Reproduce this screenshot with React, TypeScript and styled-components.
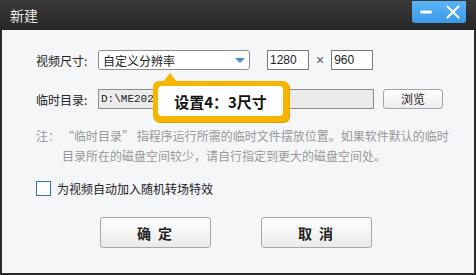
import styled, { createGlobalStyle } from 'styled-components';

const GlobalStyle = createGlobalStyle`
  html, body {
    margin: 0;
    padding: 0;
    background: #2b2b2b;
  }
  body {
    font-family: "Noto Sans CJK SC", "Liberation Sans", sans-serif;
  }
`;

const App: React.FC = () => {
  return (
    <Window>
      <GlobalStyle />
      <TitleBar>
        <Title>新建</Title>
        <WinButtons>
          <WinBtn aria-label="minimize">
            <svg width="16" height="16" viewBox="0 0 16 16">
              <rect x="2" y="6.5" width="12" height="3" rx="1.5" fill="#fff" />
            </svg>
          </WinBtn>
          <WinBtn aria-label="close">
            <svg width="16" height="16" viewBox="0 0 16 16">
              <path d="M2.5 2.5 L13.5 13.5 M13.5 2.5 L2.5 13.5" stroke="#fff" strokeWidth="2" strokeLinecap="round" />
            </svg>
          </WinBtn>
        </WinButtons>
      </TitleBar>
      <Body>
        <Row>
          <Label>视频尺寸:</Label>
          <Select>
            <span>自定义分辨率</span>
            <Arrow />
          </Select>
          <SizeInput $gap={17}>1280</SizeInput>
          <Times>×</Times>
          <SizeInput $gap={7}>960</SizeInput>
        </Row>
        <Row>
          <Label>临时目录:</Label>
          <PathInput>D:\ME2024</PathInput>
          <Browse>浏览</Browse>
          <Callout>
            <CalloutInner>设置4：3尺寸</CalloutInner>
          </Callout>
        </Row>
        <Note>
          <NoteHead>注：</NoteHead>
          <span>
            “临时目录” 指程序运行所需的临时文件摆放位置。如果软件默认的临时
            <br />
            目录所在的磁盘空间较少，请自行指定到更大的磁盘空间处。
          </span>
        </Note>
        <Check>
          <Box />
          <span>为视频自动加入随机转场特效</span>
        </Check>
        <Actions>
          <ActionButton>确 定</ActionButton>
          <ActionButton>取 消</ActionButton>
        </Actions>
      </Body>
    </Window>
  );
};

export default App;

const Window = styled.div`
  width: 476px;
  height: 275px;
  display: flex;
  flex-direction: column;
  background: #2b2b2b;
  box-sizing: border-box;
`;

const TitleBar = styled.div`
  height: 30px;
  flex: none;
  display: flex;
  align-items: flex-start;
  justify-content: space-between;
  background: linear-gradient(#3a3a3a, #262626);
  padding: 0 10px 0 10px;
`;

const Title = styled.div`
  color: #e8e8e8;
  font-size: 14px;
  line-height: 30px;
`;

const WinButtons = styled.div`
  margin-top: 1px;
  width: 54px;
  height: 22px;
  display: flex;
  align-items: center;
  justify-content: space-around;
  background: linear-gradient(#5ab4f5, #3d9ae8);
  border-radius: 0 0 3px 3px;
`;

const WinBtn = styled.div`
  display: flex;
  align-items: center;
  justify-content: center;
  width: 22px;
  height: 20px;
`;

const Body = styled.div`
  flex: 1;
  margin: 0 2px 2px 2px;
  background: #f4f6f8;
  padding: 20px 0 0 34px;
  display: flex;
  flex-direction: column;
  font-size: 12px;
  color: #222;
`;

const Row = styled.div`
  position: relative;
  display: flex;
  align-items: center;
  height: 20px;
  margin-bottom: 19px;
`;

const Label = styled.div`
  width: 62px;
`;

const Select = styled.div`
  width: 142px;
  height: 18px;
  border: 1px solid #8d8d8d;
  border-radius: 3px;
  background: #fff;
  display: flex;
  align-items: center;
  justify-content: space-between;
  padding: 0 4px 0 4px;
  box-sizing: content-box;
  font-size: 12px;
`;

const Arrow = styled.div`
  width: 0;
  height: 0;
  border-left: 5px solid transparent;
  border-right: 5px solid transparent;
  border-top: 5px solid #3d8fd6;
`;

const SizeInput = styled.div<{ $gap: number }>`
  margin-left: ${({ $gap }) => $gap}px;
  width: 38px;
  height: 18px;
  border: 1px solid #777;
  background: #fff;
  padding-left: 2px;
  line-height: 18px;
  font-family: "Liberation Sans", sans-serif;
  font-size: 12px;
`;

const Times = styled.div`
  margin-left: 7px;
  color: #555;
  font-family: "Liberation Sans", sans-serif;
  font-size: 14px;
`;

const PathInput = styled.div`
  width: 272px;
  height: 18px;
  border: 1px solid #8d8d8d;
  background: #ebebeb;
  line-height: 18px;
  padding-left: 2px;
  font-family: "Liberation Mono", monospace;
  font-size: 11px;
`;

const Browse = styled.div`
  margin-left: 9px;
  width: 58px;
  height: 18px;
  border: 1px solid #a5a5a5;
  border-radius: 3px;
  background: linear-gradient(#ffffff, #ececec);
  text-align: center;
  line-height: 18px;
  font-size: 12px;
`;

const Callout = styled.div`
  position: absolute;
  left: 117px;
  top: -8px;
  width: 136px;
  height: 41px;
  box-sizing: border-box;
  background: #f7b500;
  border-radius: 6px;
  padding: 5px 6px 6px 5px;
  box-shadow: 1px 1px 0 #e4a300;
  &::before {
    content: '';
    position: absolute;
    left: 10px;
    top: -8px;
    border-left: 7px solid transparent;
    border-right: 7px solid transparent;
    border-bottom: 9px solid #f7b500;
  }
`;

const CalloutInner = styled.div`
  height: 100%;
  background: #fff;
  border-radius: 4px;
  display: flex;
  align-items: center;
  justify-content: center;
  font-size: 15px;
  font-weight: 700;
  color: #111;
`;

const Note = styled.div`
  margin-top: -2px;
  display: flex;
  color: #999;
  font-size: 12px;
  line-height: 20px;
  white-space: nowrap;
`;

const NoteHead = styled.span`
  flex: none;
  width: 26px;
`;

const Check = styled.div`
  margin-top: 14px;
  display: flex;
  align-items: center;
  gap: 6px;
  font-size: 12px;
`;

const Box = styled.div`
  width: 13px;
  height: 13px;
  border: 1px solid #3f6fa6;
  background: #fff;
`;

const Actions = styled.div`
  margin-top: 20px;
  padding-left: 64px;
  display: flex;
  gap: 50px;
`;

const ActionButton = styled.div`
  width: 111px;
  height: 31px;
  box-sizing: border-box;
  border: 1px solid #a8a8a8;
  border-radius: 3px;
  background: linear-gradient(#ffffff, #eaeaea);
  display: flex;
  align-items: center;
  justify-content: center;
  font-size: 14px;
  font-weight: 700;
  color: #222;
  letter-spacing: 2px;
`;
